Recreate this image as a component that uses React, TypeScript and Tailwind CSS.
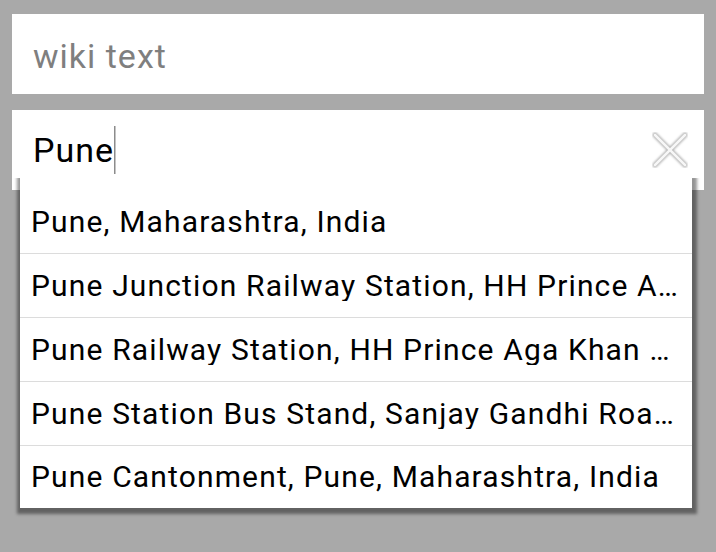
import React from "react";

const suggestions = [
  "Pune, Maharashtra, India",
  "Pune Junction Railway Station, HH Prince Aga Khan Road, Pune, Maharashtra, India",
  "Pune Railway Station, HH Prince Aga Khan Road, Pune, Maharashtra, India",
  "Pune Station Bus Stand, Sanjay Gandhi Road, Pune, Maharashtra, India",
  "Pune Cantonment, Pune, Maharashtra, India",
];

function ClearIcon() {
  return (
    <svg width="36" height="36" viewBox="0 0 36 36" className="shrink-0">
      <defs>
        <filter id="glow" x="-20%" y="-20%" width="140%" height="140%">
          <feGaussianBlur stdDeviation="1" />
        </filter>
      </defs>
      <g stroke="#b4b4b4" strokeWidth="5" strokeLinecap="round" filter="url(#glow)">
        <line x1="3" y1="3" x2="33" y2="33" />
        <line x1="33" y1="3" x2="3" y2="33" />
      </g>
      <g stroke="#f7f7f7" strokeWidth="2.5" strokeLinecap="round">
        <line x1="3" y1="3" x2="33" y2="33" />
        <line x1="33" y1="3" x2="3" y2="33" />
      </g>
    </svg>
  );
}

export default function App() {
  return (
    <main
      className="relative min-h-[552px] w-[716px] bg-[#a9a9a9] px-[12px] pt-[14px] flex flex-col gap-[16px]"
      style={{ fontFamily: "Roboto, 'Noto Sans', sans-serif" }}
    >
      <div className="h-[80px] bg-white flex items-center pl-[21px] pt-[4px]">
        <span className="text-[34px] tracking-[1px] text-[#7f7f7f] leading-none">wiki text</span>
      </div>

      <div className="h-[80px] bg-white flex items-center pl-[21px] pr-[16px]">
        <span className="text-[34px] tracking-[1px] text-black leading-none">Pune</span>
        <span className="w-[2px] h-[48px] bg-[#c4c4c4] border-l border-[#8c8c8c]" />
        <span className="flex-1" />
        <ClearIcon />
      </div>

      {/* suggestion popup */}
      <ul className="absolute left-[20px] top-[178px] w-[672px] bg-white pt-[12px] shadow-[1px_2px_3px_4px_rgba(0,0,0,0.42)] [clip-path:inset(0_-12px_-12px_-12px)]">
        {suggestions.map((s, i) => (
          <li
            key={s}
            className={
              i < suggestions.length - 1
                ? "h-[64px] border-b border-[#dcdcdc] flex items-center pl-[11px] pr-[14px]"
                : "h-[62px] flex items-center pl-[11px] pr-[14px]"
            }
          >
            <span className="truncate text-[30px] tracking-[1.15px] text-black leading-none">{s}</span>
          </li>
        ))}
      </ul>
    </main>
  );
}
